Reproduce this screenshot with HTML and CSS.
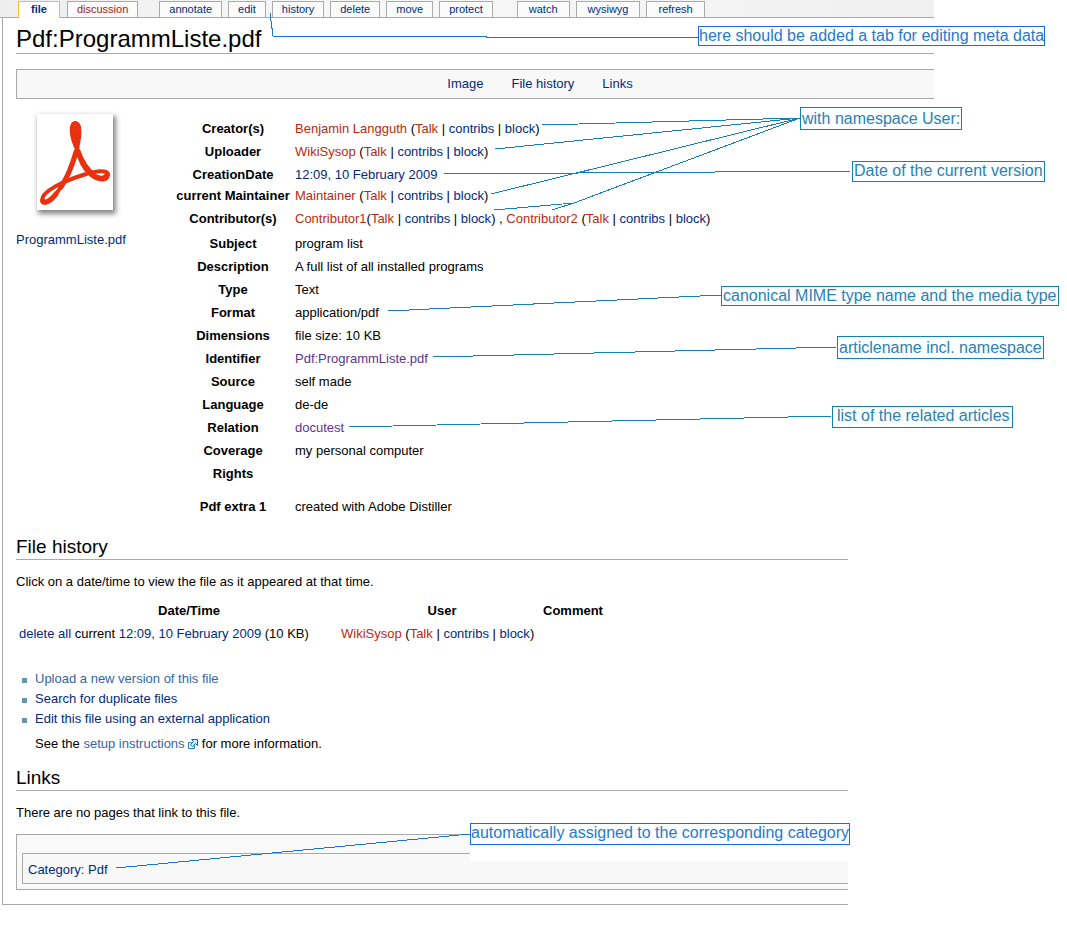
FILE: index.html
```
<!DOCTYPE html>
<html lang="en">
<head>
<meta charset="utf-8">
<title>Pdf:ProgrammListe.pdf</title>
<link rel="stylesheet" href="styles.css">
</head>
<body>
<div class="page">
  <header class="tabs">
    <nav class="tab-group group-page">
      <a class="tab active" href="#">file</a>
      <a class="tab missing" href="#">discussion</a>
    </nav>
    <nav class="tab-group">
      <a class="tab" href="#">annotate</a>
      <a class="tab" href="#">edit</a>
      <a class="tab" href="#">history</a>
      <a class="tab" href="#">delete</a>
      <a class="tab" href="#">move</a>
      <a class="tab" href="#">protect</a>
    </nav>
    <nav class="tab-group group-tools">
      <a class="tab" href="#">watch</a>
      <a class="tab" href="#">wysiwyg</a>
      <a class="tab" href="#">refresh</a>
    </nav>
  </header>

  <main class="content">
    <section class="upper">
      <h1>Pdf:ProgrammListe.pdf</h1>
      <nav class="toc">
        <a href="#file">Image</a>
        <a href="#history">File history</a>
        <a href="#links">Links</a>
      </nav>
      <div class="file" id="file">
        <figure class="thumb">
          <svg class="thumb-image" viewBox="0 0 76 96" role="img" aria-label="PDF document">
            <g fill="none" stroke="#e8320f" stroke-linecap="round" stroke-linejoin="round">
              <path stroke-width="4" d="M40 35C34 23 33 10 38 9C44 9 43 22 40 34C37 51 27 70 17 83C12 89 5 91 5 86C5 77 27 67 46 61C58 57 71 55 71 61C70 68 59 66 52 59C46 53 42 44 40 35"/>
              <path stroke-width="5" d="M36 13C35 18 37 26 40 33M41 12C41 17 40 24 40 29M41 37C44 46 49 55 57 61M39 38C35 52 30 64 24 73M6 87C9 90 15 85 19 80M57 62C62 65 68 65 70 61"/>
            </g>
          </svg>
          <figcaption><a href="#">ProgrammListe.pdf</a></figcaption>
        </figure>
        <table class="meta">
          <tr><th scope="row">Creator(s)</th><td><a class="red" href="#">Benjamin Langguth</a> (<a class="red" href="#">Talk</a> | <a href="#">contribs</a> | <a href="#">block</a>)</td></tr>
          <tr><th scope="row">Uploader</th><td><a class="red" href="#">WikiSysop</a> (<a class="red" href="#">Talk</a> | <a href="#">contribs</a> | <a href="#">block</a>)</td></tr>
          <tr><th scope="row">CreationDate</th><td><a href="#">12:09, 10 February 2009</a></td></tr>
          <tr class="tight"><th scope="row">current Maintainer</th><td><a class="red" href="#">Maintainer</a> (<a class="red" href="#">Talk</a> | <a href="#">contribs</a> | <a href="#">block</a>)</td></tr>
          <tr class="loose"><th scope="row">Contributor(s)</th><td><a class="red" href="#">Contributor1</a>(<a class="red" href="#">Talk</a> | <a href="#">contribs</a> | <a href="#">block</a>) , <a class="red" href="#">Contributor2</a> (<a class="red" href="#">Talk</a> | <a href="#">contribs</a> | <a href="#">block</a>)</td></tr>
          <tr><th scope="row">Subject</th><td>program list</td></tr>
          <tr><th scope="row">Description</th><td>A full list of all installed programs</td></tr>
          <tr><th scope="row">Type</th><td>Text</td></tr>
          <tr><th scope="row">Format</th><td>application/pdf</td></tr>
          <tr><th scope="row">Dimensions</th><td>file size: 10 KB</td></tr>
          <tr><th scope="row">Identifier</th><td><a class="visited" href="#">Pdf:ProgrammListe.pdf</a></td></tr>
          <tr><th scope="row">Source</th><td>self made</td></tr>
          <tr><th scope="row">Language</th><td>de-de</td></tr>
          <tr><th scope="row">Relation</th><td><a class="visited" href="#">docutest</a></td></tr>
          <tr><th scope="row">Coverage</th><td>my personal computer</td></tr>
          <tr><th scope="row">Rights</th><td></td></tr>
          <tr class="extra"><th scope="row">Pdf extra 1</th><td>created with Adobe Distiller</td></tr>
        </table>
      </div>
    </section>

    <section class="lower">
      <h2 id="history">File history</h2>
      <p>Click on a date/time to view the file as it appeared at that time.</p>
      <table class="history">
        <tr><th class="col-date" scope="col">Date/Time</th><th class="col-user" scope="col">User</th><th scope="col">Comment</th></tr>
        <tr>
          <td><a href="#">delete all</a> current <a href="#">12:09, 10 February 2009</a> (10 KB)</td>
          <td><a class="red" href="#">WikiSysop</a> (<a class="red" href="#">Talk</a> | <a href="#">contribs</a> | <a href="#">block</a>)</td>
          <td></td>
        </tr>
      </table>
      <ul class="actions">
        <li><a class="external" href="#">Upload a new version of this file</a></li>
        <li><a href="#">Search for duplicate files</a></li>
        <li><a href="#">Edit this file using an external application</a>
          <p class="hint">See the <a class="external" href="#">setup instructions <svg class="external-icon" viewBox="0 0 10 10" aria-hidden="true"><path d="M3.5 3.5h-3v6h6v-3" fill="#fff" stroke="#2a7fc0"/><path d="M3.5.5h6v6l-2-2-3 3-2-2 3-3z" fill="#d8efff" stroke="#06c"/></svg></a> for more information.</p>
        </li>
      </ul>
      <h2 id="links">Links</h2>
      <p>There are no pages that link to this file.</p>
      <div class="catlinks">
        <div class="categories"><a href="#">Category</a>: <a href="#">Pdf</a></div>
      </div>
    </section>
  </main>

  <div class="annotations">
    <div class="patch"></div>
    <svg class="leaders" width="1067" height="930" viewBox="0 0 1067 930" aria-hidden="true">
      <path d="M270 13L273 36L486 36L486 37L698 37" stroke="#1a76cc"/>
      <path d="M542 125L800 118M495 149L800 118M491 194L800 118M494 210L574 203M552 210L574 203L800 118M444 174L852 171"/>
      <path d="M388 311L721 295M433 357L837 347M349 427L832 416"/>
      <path d="M116 868L470 834" stroke="#1a76cc"/>
    </svg>
    <div class="note note-tab">here should be added a tab for editing meta data</div>
    <div class="note note-user">with namespace User:</div>
    <div class="note note-date">Date of the current version</div>
    <div class="note note-mime">canonical MIME type name and the media type</div>
    <div class="note note-article">articlename incl. namespace</div>
    <div class="note note-related">list of the related articles</div>
    <div class="note note-category">automatically assigned to the corresponding category</div>
  </div>
</div>
</body>
</html>
```
FILE: styles.css
```
* { box-sizing: border-box; }

body {
  margin: 0;
  background: #fff;
  color: #000;
  font: 13px/16px "Liberation Sans", Arial, sans-serif;
}

a { color: #002b80; text-decoration: none; }
a.red { color: #ba2a10; }
a.visited { color: #5a3696; }
a.external { color: #3366a8; }

.page { position: relative; }

/* Tabs */
.tabs {
  display: flex;
  gap: 21px;
  width: 87.5%;
  height: 18px;
  padding: 1px 0 0 18px;
  background: linear-gradient(90deg, #eee, #f8f8f8 40%, #f0f0f0);
  border-bottom: 1px solid #aaa;
  font-size: 11px;
}
.tab-group { display: flex; gap: 6px; }
.group-page { gap: 7px; }
.group-tools { margin-left: 3px; }
.tab {
  height: 16px;
  padding: 0 9px;
  line-height: 15px;
  background: #fbfbfb;
  border: 1px solid #aaa;
  border-bottom: 0;
}
.group-tools .tab { padding: 0 11px; }
.tab.active {
  height: 17px;
  padding: 0 12px;
  background: #fff;
  border-color: #fabd23;
  font-weight: bold;
}
.tab.missing { color: #a01a10; }

/* Page body */
.content {
  margin-left: 2px;
  border-left: 1px solid #aaa;
}
.content::after {
  content: "";
  display: block;
  width: 79.4%;
  height: 14px;
  border-bottom: 1px solid #aaa;
}
.upper { width: 87.5%; padding-left: 13px; }
.lower { width: 79.4%; padding-left: 13px; }

h1, h2 {
  margin: 0;
  border-bottom: 1px solid #aaa;
  font-weight: normal;
}
h1 { padding-top: 7px; font-size: 24px; line-height: 28px; }
h2 { padding-bottom: 1px; font-size: 19px; line-height: 22px; }
p { margin: 14px 0 0; }

.toc {
  display: flex;
  justify-content: center;
  gap: 28px;
  margin-top: 15px;
  padding: 6px 0 6px 129px;
  background: #f8f8f8;
  border: 1px solid #aaa;
  border-right: 0;
}

.file {
  display: grid;
  grid-template-columns: 158px 1fr;
  padding-top: 15px;
}
.thumb { margin: 0; }
.thumb-image {
  display: block;
  width: 76px;
  height: 96px;
  margin-left: 21px;
  background: #fff;
  box-shadow: 2px 3px 5px 1px #888;
}
figcaption { margin-top: 22px; }

table { border-collapse: collapse; }
th, td { padding: 0; }
.meta { margin-top: 3px; justify-self: start; }
.meta tr { height: 23px; }
.meta .tight { height: 19px; }
.meta .loose { height: 27px; }
.meta .extra { height: 44px; }
.meta th { width: 118px; white-space: nowrap; }
.meta td { padding-left: 3px; text-align: left; }

.lower { padding-top: 7px; }

.history { margin: 9px 0 0 3px; }
.history tr { height: 23px; }
.history td { padding-right: 5px; white-space: nowrap; }
.history .col-date { width: 322px; padding-left: 18px; }
.history .col-user { width: 202px; }
.history th { text-align: center; }

.actions {
  margin: 24px 0 13px;
  padding: 0;
  list-style: none;
}
.actions li {
  padding-left: 19px;
  line-height: 20px;
  background: linear-gradient(#6a94a8, #6a94a8) 6px 9px / 5px 5px no-repeat;
}
.hint { margin-top: 5px; }
.external-icon { width: 10px; height: 10px; vertical-align: -1px; }

.catlinks {
  margin-top: 13px;
  padding: 18px 0 5px 5px;
  background: #f9f9f9;
  border: 1px solid #aaa;
  border-right: 0;
}
.categories {
  padding: 8px 5px 5px;
  color: #002b80;
  background: #f8f8f8;
  border: 1px solid #aaa;
  border-right: 0;
}

/* Callouts drawn over the page */
.annotations { position: absolute; top: 0; left: 0; pointer-events: none; }
.leaders {
  position: absolute;
  top: 0;
  left: 0;
  fill: none;
  stroke: #1480b8;
  stroke-width: 1;
  shape-rendering: crispEdges;
}
.note {
  position: absolute;
  height: 20px;
  padding: 0 1px;
  color: #2e7fb4;
  background: #fbffff;
  border: 1px solid #1480b0;
  font-size: 16px;
  line-height: 18px;
  white-space: nowrap;
}
.note-tab { top: 26px; left: 698px; padding: 0; color: #2a78cc; border-color: #1a70d0; }
.note-user { top: 107px; left: 800px; height: 23px; line-height: 21px; }
.note-date { top: 161px; left: 852px; height: 21px; }
.note-mime { top: 286px; left: 721px; }
.note-article { top: 336px; left: 837px; height: 23px; line-height: 21px; }
.note-related { top: 406px; left: 832px; height: 22px; padding: 0 2px 0 4px; }
.note-category { top: 823px; left: 470px; height: 22px; padding: 0; color: #2a78cc; border-color: #1a70d0; }
.patch { position: absolute; top: 823px; left: 470px; width: 379px; height: 38px; background: #fff; }
```
